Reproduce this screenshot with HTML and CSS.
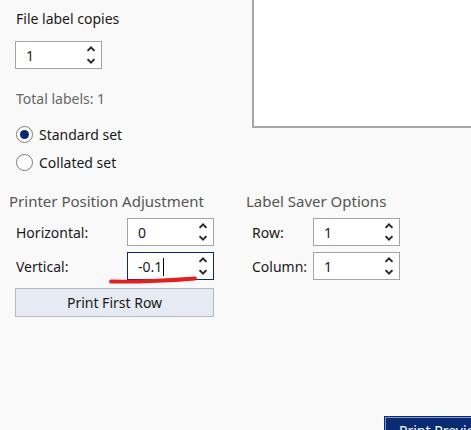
FILE: index.html
```html
<!DOCTYPE html>
<html>
<head>
<meta charset="utf-8">
<link rel="stylesheet" href="styles.css">
</head>
<body>
<div class="page">
  <div class="top">
    <div class="left">
      <div class="label">File label copies</div>
      <div class="spin copies"><span class="val">1</span><span class="arrows"><svg width="10" height="22" viewBox="0 0 10 22"><path d="M0.8 6.2 L5 2 L9.2 6.2 L7.7 7.4 L5 4.8 L2.3 7.4 Z" fill="#2b2b2b"/><path d="M0.8 15.8 L5 20 L9.2 15.8 L7.7 14.6 L5 17.2 L2.3 14.6 Z" fill="#2b2b2b"/></svg></span></div>
      <div class="total">Total labels: 1</div>
      <div class="radios">
        <label class="radio"><span class="dot on"></span>Standard set</label>
        <label class="radio"><span class="dot"></span>Collated set</label>
      </div>
    </div>
    <div class="preview"></div>
  </div>
  <div class="bottom">
    <div class="group ppa">
      <div class="heading">Printer Position Adjustment</div>
      <div class="row"><span class="rlabel">Horizontal:</span><div class="spin"><span class="val">0</span><span class="arrows"><svg width="10" height="22" viewBox="0 0 10 22"><path d="M0.8 6.2 L5 2 L9.2 6.2 L7.7 7.4 L5 4.8 L2.3 7.4 Z" fill="#2b2b2b"/><path d="M0.8 15.8 L5 20 L9.2 15.8 L7.7 14.6 L5 17.2 L2.3 14.6 Z" fill="#2b2b2b"/></svg></span></div></div>
      <div class="row"><span class="rlabel">Vertical:</span><div class="spin focus"><span class="val">-0.1<span class="caret"></span></span><span class="arrows"><svg width="10" height="22" viewBox="0 0 10 22"><path d="M0.8 6.2 L5 2 L9.2 6.2 L7.7 7.4 L5 4.8 L2.3 7.4 Z" fill="#2b2b2b"/><path d="M0.8 15.8 L5 20 L9.2 15.8 L7.7 14.6 L5 17.2 L2.3 14.6 Z" fill="#2b2b2b"/></svg></span>
        <svg class="mark" width="100" height="12" viewBox="0 0 100 12"><path d="M3 8.5 C 25 9, 55 8, 87 5.5" stroke="#e2201f" stroke-width="3.8" fill="none" stroke-linecap="round"/></svg>
      </div></div>
      <button class="btn">Print First Row</button>
    </div>
    <div class="group lso">
      <div class="heading">Label Saver Options</div>
      <div class="row"><span class="rlabel">Row:</span><div class="spin"><span class="val">1</span><span class="arrows"><svg width="10" height="22" viewBox="0 0 10 22"><path d="M0.8 6.2 L5 2 L9.2 6.2 L7.7 7.4 L5 4.8 L2.3 7.4 Z" fill="#2b2b2b"/><path d="M0.8 15.8 L5 20 L9.2 15.8 L7.7 14.6 L5 17.2 L2.3 14.6 Z" fill="#2b2b2b"/></svg></span></div></div>
      <div class="row"><span class="rlabel">Column:</span><div class="spin"><span class="val">1</span><span class="arrows"><svg width="10" height="22" viewBox="0 0 10 22"><path d="M0.8 6.2 L5 2 L9.2 6.2 L7.7 7.4 L5 4.8 L2.3 7.4 Z" fill="#2b2b2b"/><path d="M0.8 15.8 L5 20 L9.2 15.8 L7.7 14.6 L5 17.2 L2.3 14.6 Z" fill="#2b2b2b"/></svg></span></div></div>
    </div>
  </div>
  <div class="footer">
    <div class="primary">Print Preview</div>
  </div>
</div>
</body>
</html>
```
FILE: styles.css
```css
html, body {
  margin: 0;
  padding: 0;
  width: 471px;
  height: 430px;
  overflow: hidden;
  background: #f9f9f9;
}
.page {
  font-family: "Noto Sans", "Open Sans", sans-serif;
  font-size: 14px;
  color: #1a1a1a;
  width: 471px;
  height: 430px;
  position: relative;
  overflow: hidden;
}
.top {
  display: flex;
}
.left {
  width: 237px;
  padding-left: 15px;
  box-sizing: border-box;
}
.label {
  padding-top: 9px;
  height: 20px;
  line-height: 20px;
  padding-left: 1px;
}
.spin {
  position: relative;
  box-sizing: border-box;
  width: 87px;
  height: 28px;
  border: 1px solid #a4a4a4;
  background: #fff;
  display: flex;
  align-items: center;
  justify-content: space-between;
  padding-left: 10px;
  padding-right: 5px;
}
.spin.copies {
  margin-top: 12px;
}
.spin.focus {
  border-color: #0b2a6e;
}
.val {
  line-height: 20px;
  padding-top: 2px;
  display: flex;
  align-items: center;
}
.caret {
  display: inline-block;
  width: 1px;
  height: 18px;
  background: #000;
  margin-left: 1px;
}
.arrows {
  display: flex;
  align-items: center;
}
.arrows svg {
  display: block;
}
.total {
  color: #666;
  margin-top: 20px;
  height: 20px;
  line-height: 20px;
  padding-left: 1px;
}
.radios {
  margin-top: 15px;
  display: flex;
  flex-direction: column;
  gap: 8px;
}
.radio {
  display: flex;
  align-items: center;
  height: 20px;
  gap: 6px;
  padding-left: 1px;
}
.dot {
  box-sizing: border-box;
  width: 17px;
  height: 17px;
  border-radius: 50%;
  border: 1px solid #7a7a7a;
  background: #fff;
  position: relative;
}
.dot.on::after {
  content: "";
  position: absolute;
  left: 3px;
  top: 3px;
  width: 9px;
  height: 9px;
  border-radius: 50%;
  background: #0b2a6e;
}
.preview {
  margin-left: 15px;
  flex: 1;
  height: 128px;
  border-left: 2px solid #a6a6a6;
  border-bottom: 2px solid #a6a6a6;
  background: #fff;
  box-sizing: border-box;
  margin-right: -10px;
}
.bottom {
  display: flex;
  margin-top: 18px;
}
.group {
  display: flex;
  flex-direction: column;
}
.ppa {
  width: 237px;
  padding-left: 9px;
  box-sizing: border-box;
}
.lso {
  padding-left: 9px;
}
.heading {
  color: #555;
  font-size: 15px;
  height: 24px;
  line-height: 22px;
  margin-bottom: 4px;
}
.row {
  display: flex;
  align-items: center;
  height: 28px;
  margin-bottom: 6px;
}
.ppa .row {
  padding-left: 7px;
}
.ppa .rlabel {
  width: 111px;
}
.lso .rlabel {
  width: 61px;
  padding-left: 6px;
}
.mark {
  position: absolute;
  left: -20px;
  top: 20px;
}
.btn {
  margin-left: 6px;
  margin-top: 2px;
  width: 199px;
  height: 29px;
  font-family: inherit;
  font-size: 14px;
  color: #1a1a1a;
  background: #e6eaf2;
  border: 1px solid #b3b8c2;
  padding: 0;
}
.footer {
  position: absolute;
  left: 384px;
  top: 416px;
}
.primary {
  box-sizing: border-box;
  width: 110px;
  background: #0a2a72;
  border: 1px solid #0a2a72;
  box-shadow: inset 0 0 0 1px #7f95c4;
  color: #fff;
  font-size: 14px;
  line-height: 20px;
  padding: 4px 0 6px 14px;
  white-space: nowrap;
}
```
